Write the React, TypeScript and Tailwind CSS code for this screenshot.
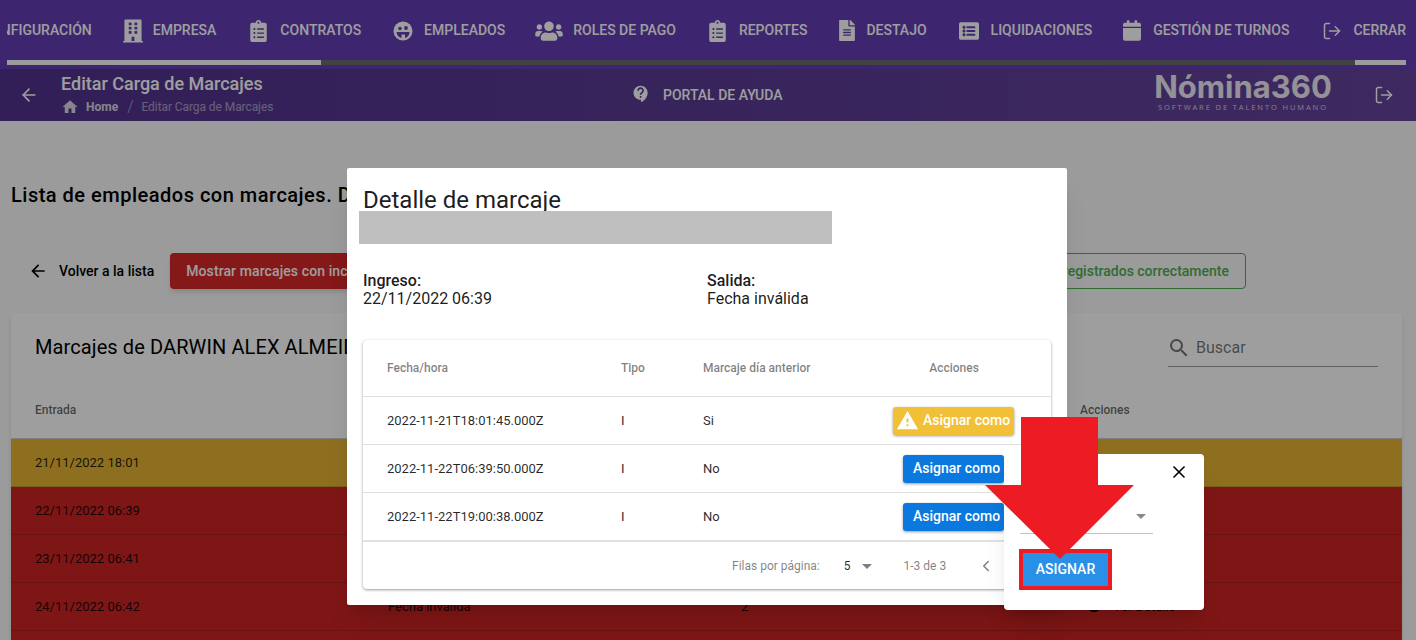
import { ArrowLeft, ChevronLeft, LogOut, X } from 'lucide-react';
import { FaBuilding, FaCalendar, FaClipboardList, FaFileAlt, FaListAlt, FaUsers } from 'react-icons/fa';
import { MdArrowBack, MdArrowDropDown, MdContactSupport, MdHome, MdSearch, MdVisibility, MdWarning } from 'react-icons/md';

function EmpleadosIcon() {
  return (
    <svg className="h-[20px] w-[20px]" viewBox="0 0 20 20">
      <circle cx="10" cy="10" r="9.5" fill="currentColor" />
      <circle cx="7" cy="7.5" r="1.7" fill="#643cb5" />
      <circle cx="13" cy="7" r="1.9" fill="#643cb5" />
      <path d="M3.5 11h13c0 3-2 5.5-4.5 6v-3.5H8.5V17c-3-.7-5-3-5-6z" fill="#643cb5" />
    </svg>
  );
}

const tabs = [
  { label: 'Empresa', box: 'w-[30px]', gap: 'mr-[34px]', icon: <FaBuilding className="h-[24px] w-[20px]" /> },
  { label: 'Contratos', box: 'w-[30px]', gap: 'mr-[32px]', icon: <FaClipboardList className="h-[22px] w-[17px]" /> },
  { label: 'Empleados', box: 'w-[31px]', gap: 'mr-[30px]', icon: <EmpleadosIcon /> },
  { label: 'Roles de pago', box: 'w-[38px]', gap: 'mr-[33px]', icon: <FaUsers className="h-[22px] w-[28px]" /> },
  { label: 'Reportes', box: 'w-[30px]', gap: 'mr-[32px]', icon: <FaClipboardList className="h-[22px] w-[17px]" /> },
  { label: 'Destajo', box: 'w-[27px]', gap: 'mr-[32px]', icon: <FaFileAlt className="h-[21px] w-[16px]" /> },
  { label: 'Liquidaciones', box: 'w-[32px]', gap: 'mr-[31px]', icon: <FaListAlt className="h-[20px] w-[20px]" /> },
  { label: 'Gestión de turnos', box: 'w-[30px]', gap: 'mr-[33px]', icon: <FaCalendar className="h-[21px] w-[18px]" /> },
  { label: 'Cerrar sesión', box: 'w-[31px]', gap: 'mr-[32px]', icon: <LogOut className="h-[20px] w-[20px]" strokeWidth={1.8} /> },
];

const rows = [
  { entrada: '21/11/2022 18:01', bg: 'bg-[#e6b434]' },
  { entrada: '22/11/2022 06:39', bg: 'bg-[#cd2424]' },
  { entrada: '23/11/2022 06:41', bg: 'bg-[#cd2424]' },
  { entrada: '24/11/2022 06:42', bg: 'bg-[#cd2424]' },
  { entrada: '25/11/2022 06:40', bg: 'bg-[#cd2424]' },
];

const detalle = [
  { fecha: '2022-11-21T18:01:45.000Z', anterior: 'Si', warn: true },
  { fecha: '2022-11-22T06:39:50.000Z', anterior: 'No', warn: false },
  { fecha: '2022-11-22T19:00:38.000Z', anterior: 'No', warn: false },
];

function TopNav() {
  return (
    <div className="h-[69px] bg-[#643cb5]">
      <div className="ml-[7px] w-[1399px] overflow-hidden">
        <div className="-ml-[25px] flex h-[60px] items-center whitespace-nowrap pt-[1px] text-[14px] font-medium uppercase text-white">
          <span className="mr-[31px]">Configuración</span>
          {tabs.map((t) => (
            <div key={t.label} className={`flex items-center ${t.gap}`}>
              <div className={`flex items-center ${t.box}`}>{t.icon}</div>
              <span>{t.label}</span>
            </div>
          ))}
        </div>
        <div className="flex h-[5px] justify-between bg-[#6b6b6b]">
          <div className="w-[314px] bg-[#fafafa]" />
          <div className="w-[51px] bg-[#fafafa]" />
        </div>
      </div>
    </div>
  );
}

function SubHeader() {
  return (
    <div className="flex h-[52px] items-center bg-gradient-to-r from-[#52328e] to-[#64449b] text-white">
      <ArrowLeft className="ml-[19px] h-[20px] w-[20px]" />
      <div className="ml-[22px] w-[572px] pb-[1px]">
        <div className="mb-[3px] text-[18px] font-medium leading-[22px]">Editar Carga de Marcajes</div>
        <div className="flex items-center text-[12px] leading-[18px]">
          <MdHome className="h-[18px] w-[18px] opacity-80" />
          <span className="ml-[7px] font-bold opacity-80">Home</span>
          <span className="ml-[9px] text-[16px] font-light opacity-50">/</span>
          <span className="ml-[8px] tracking-[-0.08px] opacity-50">Editar Carga de Marcajes</span>
        </div>
      </div>
      <MdContactSupport className="mt-[-2px] h-[20px] w-[20px] -ml-[2px]" />
      <span className="ml-[12px] text-[14px] font-medium">PORTAL DE AYUDA</span>
      <div className="ml-auto flex w-[180px] flex-col items-center pb-[8px] opacity-90">
        <span className="font-['Inter',sans-serif] text-[31px] font-bold leading-[32px]">Nómina360</span>
        <span className="font-['Open_Sans',sans-serif] text-[7.5px] leading-[9px] tracking-[1.9px] opacity-80">SOFTWARE DE TALENTO HUMANO</span>
      </div>
      <LogOut className="ml-[41px] mr-[22px] h-[20px] w-[20px]" strokeWidth={1.8} />
    </div>
  );
}

function MainContent() {
  return (
    <div className="pl-[11px] pr-[14px]">
      <h1 className="pt-[60px] text-[20px] font-medium leading-[28px] tracking-[0.5px] text-black">
        Lista de empleados con marcajes. Detalle de marcajes por empleado
      </h1>
      <div className="mt-[44px] flex h-[36px] w-[1235px] items-center pl-[17px]">
        <MdArrowBack className="h-[20px] w-[20px] text-black" />
        <span className="ml-[11px] text-[14px] font-medium text-black">Volver a la lista</span>
        <button className="ml-[16px] h-[36px] w-[250px] rounded bg-[#d72828] px-4 text-left text-[14px] font-medium tracking-[0.1px] text-white shadow-md">
          Mostrar marcajes con incidencias
        </button>
        <button className="ml-auto h-[36px] rounded border border-[#4caf50] px-4 text-[14px] font-medium text-[#4caf50]">
          Mostrar marcajes registrados correctamente
        </button>
      </div>
      <div className="mt-[24px] rounded bg-white shadow-md">
        <div className="flex h-[67px] items-center px-[24px]">
          <h2 className="text-[20px] tracking-[0.1px] text-black">Marcajes de DARWIN ALEX ALMEIDA</h2>
          <div className="ml-auto mt-[3px] flex h-[38px] w-[210px] items-center gap-[5px] border-b border-black/40 text-[16px] text-black/55">
            <MdSearch className="-ml-[1px] h-[24px] w-[24px]" />
            <span>Buscar</span>
          </div>
        </div>
        <div className="grid h-[59px] grid-cols-[353px_353px_339px_1fr] items-center border-b border-black/20 pl-[24px] pt-[2px] text-[12px] font-medium text-black/60">
          <span>Entrada</span>
          <span>Salida</span>
          <span>Marcajes</span>
          <span>Acciones</span>
        </div>
        {rows.map((r) => (
          <div key={r.entrada} className={`grid h-[48px] grid-cols-[353px_353px_339px_1fr] items-center border-b border-black/15 pl-[24px] text-[13px] text-black/85 ${r.bg}`}>
            <span>{r.entrada}</span>
            <span>Fecha inválida</span>
            <span>2</span>
            <span className="flex items-center gap-[11px] pl-[6px] text-black">
              <MdVisibility className="h-[16px] w-[16px]" />
              Ver Detalle
            </span>
          </div>
        ))}
      </div>
    </div>
  );
}

function DetalleDialog() {
  return (
    <div className="absolute left-[347px] top-[168px] z-20 h-[437px] w-[720px] rounded-[2px] bg-white px-[16px] shadow-xl">
      <h2 className="h-[43px] overflow-hidden pt-[17px] text-[24px] leading-[30px] text-black/90">Detalle de marcaje</h2>
      <div className="-ml-[4px] h-[33px] w-[473px] bg-[#bfbfbf]" />
      <div className="mt-[28px] grid h-[40px] grid-cols-[344px_1fr] text-[16px] leading-[18px] text-black/90">
        <div>
          <div className="font-medium">Ingreso:</div>
          <div>22/11/2022 06:39</div>
        </div>
        <div>
          <div className="font-medium">Salida:</div>
          <div>Fecha inválida</div>
        </div>
      </div>
      <div className="mt-[28px] w-[688px] rounded bg-white shadow-[0_1px_3px_rgba(0,0,0,0.4)]">
        <div className="grid h-[57px] grid-cols-[234px_82px_154px_194px] items-center border-b border-[#e0e0e0] pl-[24px] text-[12px] font-medium text-black/50">
          <span>Fecha/hora</span>
          <span>Tipo</span>
          <span>Marcaje día anterior</span>
          <span className="text-center">Acciones</span>
        </div>
        {detalle.map((d) => (
          <div key={d.fecha} className="grid h-[48px] grid-cols-[234px_82px_154px_194px] items-center border-b border-[#e0e0e0] pl-[24px] text-[13px] text-black/85">
            <span>{d.fecha}</span>
            <span>I</span>
            <span>{d.anterior}</span>
            <div className="flex justify-center pr-[1px]">
              {d.warn ? (
                <button className="flex h-[28px] w-[121px] items-center gap-[4px] rounded-[3px] bg-[#f2c037] pl-[3px] text-[14px] font-medium text-white shadow-[0_1px_3px_rgba(0,0,0,0.4)]">
                  <MdWarning className="h-[23px] w-[23px]" />
                  Asignar como
                </button>
              ) : (
                <button className="h-[28px] w-[101px] rounded-[3px] bg-[#0a78de] pl-[10px] text-left text-[14px] font-medium whitespace-nowrap text-white shadow-[0_1px_3px_rgba(0,0,0,0.4)]">
                  Asignar como
                </button>
              )}
            </div>
          </div>
        ))}
        <div className="flex h-[48px] items-center border-t border-[#e0e0e0] pl-[369px] text-[12px] text-black/50">
          <span>Filas por página:</span>
          <span className="ml-[24px] text-black/85">5</span>
          <MdArrowDropDown className="ml-[4px] h-[24px] w-[24px]" />
          <span className="ml-[25px]">1-3 de 3</span>
          <ChevronLeft className="ml-[31px] h-[18px] w-[18px]" />
        </div>
      </div>
    </div>
  );
}

function AsignarPopup() {
  return (
    <div className="absolute left-[1004px] top-[454px] z-30 h-[156px] w-[200px] rounded bg-white shadow-xl">
      <div className="flex h-[36px] items-center justify-end pr-[15px] text-black">
        <X className="h-[20px] w-[20px]" strokeWidth={2} />
      </div>
      <div className="ml-[16px] flex h-[44px] w-[133px] items-center justify-end border-b border-[#c4c4c4] pt-[8px] text-[#8a8a8a]">
        <MdArrowDropDown className="h-[24px] w-[24px]" />
      </div>
      <div className="ml-[15px] mt-[15px] w-[93px] border-[4px] border-[#ed1c24]">
        <button className="h-[33px] w-full bg-[#2a8fe6] text-[14px] font-medium text-white">ASIGNAR</button>
      </div>
    </div>
  );
}

function RedArrow() {
  return (
    <svg className="absolute left-[985px] top-[417px] z-40" width="150" height="143" viewBox="0 0 150 143">
      <polygon points="36,0 113,0 113,68 149,68 75,142 0,68 36,68" fill="#ed1c24" />
    </svg>
  );
}

export default function App() {
  return (
    <div className="relative h-[640px] w-[1416px] overflow-hidden bg-[#fafafa] font-['Roboto',sans-serif]">
      <TopNav />
      <SubHeader />
      <MainContent />
      <div className="absolute inset-0 z-10 bg-black/[.38]" />
      <DetalleDialog />
      <AsignarPopup />
      <RedArrow />
    </div>
  );
}
